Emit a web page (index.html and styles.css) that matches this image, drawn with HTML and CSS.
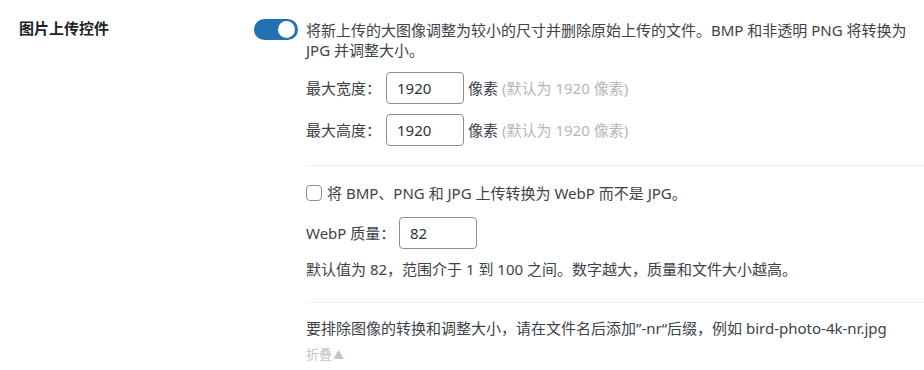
FILE: index.html
```html
<!DOCTYPE html>
<html lang="zh-CN">
<head>
<meta charset="UTF-8">
<title>图片上传控件</title>
<link rel="stylesheet" href="styles.css">
</head>
<body>
  <div class="setting-row">
    <div class="setting-label">图片上传控件</div>
    <div class="setting-toggle">
      <span class="switch on"><span class="knob"></span></span>
    </div>
    <div class="setting-body">
      <p class="desc">将新上传的大图像调整为较小的尺寸并删除原始上传的文件。BMP 和非透明 PNG 将转换为 JPG 并调整大小。</p>

      <div class="field-row first">
        <span class="field-label">最大宽度：</span>
        <input class="num-input" type="text" value="1920">
        <span class="unit">像素</span>
        <span class="hint">(默认为 1920 像素)</span>
      </div>
      <div class="field-row">
        <span class="field-label">最大高度：</span>
        <input class="num-input" type="text" value="1920">
        <span class="unit">像素</span>
        <span class="hint">(默认为 1920 像素)</span>
      </div>

      <hr class="divider">

      <label class="check-row">
        <span class="checkbox"></span>
        <span>将 BMP、PNG 和 JPG 上传转换为 WebP 而不是 JPG。</span>
      </label>
      <div class="field-row webp">
        <span class="field-label">WebP 质量：</span>
        <input class="num-input" type="text" value="82">
      </div>
      <p class="note">默认值为 82，范围介于 1 到 100 之间。数字越大，质量和文件大小越高。</p>

      <hr class="divider second">

      <p class="note">要排除图像的转换和调整大小，请在文件名后添加”-nr“后缀，例如 bird-photo-4k-nr.jpg</p>
      <a class="collapse" href="#">折叠<span class="arrow">▲</span></a>
    </div>
  </div>
</body>
</html>
```

FILE: styles.css
```css
body {
  margin: 0;
  background-color: #fff;
  font-family: "Noto Sans", "Noto Sans CJK SC", sans-serif;
  font-size: 15px;
  color: #3c434a;
}

.setting-row {
  display: flex;
  align-items: flex-start;
  padding: 18px 0 0 19px;
}

.setting-label {
  width: 235px;
  font-family: "Noto Sans CJK SC", sans-serif;
  font-weight: 700;
  color: #1d2327;
  line-height: 20px;
}

.setting-toggle {
  width: 52px;
  padding-top: 1px;
}

.switch {
  display: block;
  width: 44px;
  height: 21px;
  border-radius: 11px;
  background-color: #2271b1;
  position: relative;
}

.switch .knob {
  position: absolute;
  top: 2px;
  right: 3px;
  width: 17px;
  height: 17px;
  border-radius: 50%;
  background-color: #fff;
}

.setting-body {
  flex: 1;
  line-height: 20px;
  padding-top: 2px;
}

.desc {
  margin: 0;
  max-width: 606px;
}

.field-row {
  display: flex;
  align-items: center;
  margin-top: 10px;
}

.field-row.first {
  margin-top: 12px;
}

.field-label {
  width: 80px;
}

.num-input {
  box-sizing: border-box;
  width: 78px;
  height: 32px;
  padding: 0 10px;
  border: 1px solid #8c8f94;
  border-radius: 4px;
  font-family: inherit;
  font-size: 15px;
  color: #2c3338;
  background: #fff;
}

.unit {
  margin-left: 4px;
}

.hint {
  margin-left: 4px;
  color: #b4b7ba;
}

.divider {
  border: 0;
  border-top: 1px solid #f0f0f1;
  margin: 19px 0 17px 0;
}

.divider.second {
  margin: 23px 0 15px 0;
}

.check-row {
  display: flex;
  align-items: center;
  gap: 5px;
}

.checkbox {
  box-sizing: border-box;
  width: 16px;
  height: 16px;
  border: 1px solid #8c8f94;
  border-radius: 4px;
  background: #fff;
}

.field-row.webp {
  margin-top: 14px;
}

.field-row.webp .field-label {
  width: 93px;
}

.note {
  margin: 6px 0 0 0;
}

.field-row.webp + .note {
  margin-top: 10px;
}

.collapse {
  display: inline-block;
  margin-top: 6px;
  font-size: 13px;
  color: #c3c4c7;
  text-decoration: none;
}

.collapse .arrow {
  font-size: 11px;
  margin-left: 1px;
}
```
